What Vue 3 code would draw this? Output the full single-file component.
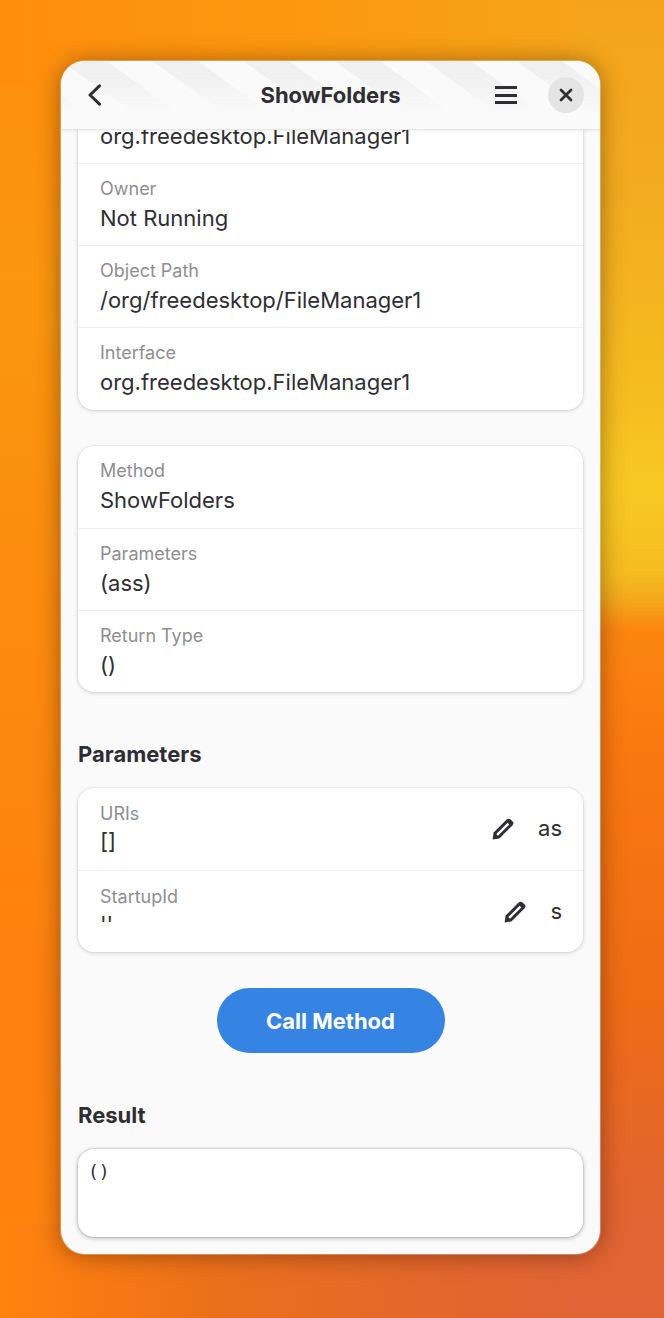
<script setup>
const cardA = [
  { label: 'Owner', value: 'Not Running' },
  { label: 'Object Path', value: '/org/freedesktop/FileManager1' },
  { label: 'Interface', value: 'org.freedesktop.FileManager1' },
]
const cardB = [
  { label: 'Method', value: 'ShowFolders' },
  { label: 'Parameters', value: '(ass)' },
  { label: 'Return Type', value: '()' },
]
const params = [
  { label: 'URIs', value: '[]', type: 'as' },
  { label: 'StartupId', value: "''", type: 's' },
]
</script>

<template>
  <div class="desktop">
    <div class="window">
      <header class="header">
        <div class="start">
          <button class="icon-btn back" aria-label="Back">
            <svg width="14" height="22" viewBox="0 0 14 22"><path d="M11.5 1.8 L2 11 L11.5 20.2" fill="none" stroke="#2e2e33" stroke-width="3" stroke-linecap="round" stroke-linejoin="round" /></svg>
          </button>
        </div>
        <h1 class="title">ShowFolders</h1>
        <div class="end">
          <button class="icon-btn menu" aria-label="Menu">
            <span></span><span></span><span></span>
          </button>
          <button class="close" aria-label="Close">
            <svg width="14" height="14" viewBox="0 0 14 14"><path d="M2 2 L12 12 M12 2 L2 12" stroke="#2e2e33" stroke-width="2.8" stroke-linecap="round" /></svg>
          </button>
        </div>
      </header>
      <main class="content">
        <section class="card first">
          <div class="row clipped">
            <div class="value">org.freedesktop.FileManager1</div>
          </div>
          <div v-for="r in cardA" :key="r.label" class="row">
            <div class="label">{{ r.label }}</div>
            <div class="value">{{ r.value }}</div>
          </div>
        </section>
        <section class="card second">
          <div v-for="r in cardB" :key="r.label" class="row">
            <div class="label">{{ r.label }}</div>
            <div class="value">{{ r.value }}</div>
          </div>
        </section>
        <h2 class="heading params-h">Parameters</h2>
        <section class="card">
          <div v-for="p in params" :key="p.label" class="row param">
            <div class="param-text">
              <div class="label">{{ p.label }}</div>
              <div class="value">{{ p.value }}</div>
            </div>
            <svg class="pencil" width="22" height="22" viewBox="0 0 22 22">
              <path d="M0.6 21.4 L1.6 14.6 L14.6 1.6 Q16.6 -0.2 18.6 1.4 L20.6 3.4 Q22.2 5.4 20.4 7.4 L7.4 20.4 Z" fill="#2e2e33" />
              <path d="M6 16 L15.6 6.4" stroke="#fff" stroke-width="2.4" stroke-linecap="square" />
            </svg>
            <div class="type">{{ p.type }}</div>
          </div>
        </section>
        <div class="actions">
          <button class="call">Call Method</button>
        </div>
        <h2 class="heading result-h">Result</h2>
        <div class="result">()</div>
      </main>
    </div>
  </div>
</template>

<style>
html, body { margin: 0; padding: 0; }
</style>

<style scoped>
.desktop {
  width: 664px;
  height: 1318px;
  box-sizing: border-box;
  padding: 61px 64px 64px 61px;
  overflow: hidden;
  font-family: Inter, "Noto Sans", sans-serif;
  color: #2e2e33;
  background-color: #fb8a0f;
  background-image:
    linear-gradient(180deg, #f5a31a 0, #f3ac1f 200px, #f5bb20 380px, #f8c822 490px, #f5bd20 570px, #f3a81c 600px, #fb8510 630px, #fa7810 750px, #ef6c15 1000px, #e26430 1200px, #e06436 1318px),
    linear-gradient(90deg, #ff8e0c 0, #fc980e 300px, #f5a51a 600px),
    linear-gradient(90deg, #fe840f 0, #f87a12 90px, #ec6f1c 220px, #e5682a 400px, #e06436 600px),
    linear-gradient(180deg, #ff8e0c 0, #fa960e 300px, #fd8a0e 650px, #fe800f 1000px, #fe840f 1318px);
  background-size: 94px 100%, 100% 91px, 100% 94px, 91px 100%;
  background-position: right top, left top, left bottom, left top;
  background-repeat: no-repeat;
}
.window {
  width: 539px;
  height: 1193px;
  border-radius: 24px;
  background: #fafafa;
  overflow: hidden;
  display: flex;
  flex-direction: column;
  box-shadow: 0 0 0 1px rgba(255, 255, 255, 0.3), 0 1px 24px rgba(50, 25, 0, 0.46);
}
.header {
  flex: none;
  position: relative;
  z-index: 1;
  height: 69px;
  box-sizing: border-box;
  display: grid;
  grid-template-columns: 1fr auto 1fr;
  align-items: center;
  padding: 0 16px;
  border-bottom: 1px solid #e6e6e6;
  box-shadow: 0 1px 3px rgba(0, 0, 0, 0.07);
  background:
    linear-gradient(180deg, rgba(250, 250, 250, 0) 20%, #fafafa 80%),
    repeating-linear-gradient(36deg, #fafafa 0 1.2px, #f0f0f0 2.2px 27.9px, #fafafa 28.9px 53.5px);
}
.start { display: flex; padding-left: 11px; }
.end {
  display: flex;
  align-items: center;
  justify-content: flex-end;
  gap: 31px;
}
.icon-btn, .close, .call {
  border: 0;
  padding: 0;
  background: none;
  font-family: inherit;
}
.back { width: 14px; height: 22px; }
.title {
  margin: 0;
  text-align: center;
  font-size: 22px;
  font-weight: 700;
  line-height: 28px;
}
.menu {
  width: 22px;
  height: 18px;
  display: flex;
  flex-direction: column;
  justify-content: space-between;
}
.menu span { display: block; height: 3px; background: #2e2e33; }
.close {
  width: 36px;
  height: 36px;
  border-radius: 50%;
  background: #e4e4e5;
  display: flex;
  align-items: center;
  justify-content: center;
}
.content {
  flex: 1;
  overflow: hidden;
  padding: 0 17px;
}
.card {
  background: #fff;
  border-radius: 16px;
  box-shadow: 0 0 0 1px rgba(0, 0, 0, 0.03), 0 1px 4px rgba(0, 0, 0, 0.16);
}
.first { margin-top: -49px; padding-bottom: 1px; }
.second { margin-top: 36px; }
.row {
  height: 82px;
  box-sizing: border-box;
  padding: 14px 21px 0 22px;
  border-top: 1px solid #ededed;
}
.row:first-child { border-top: 0; }
.row.clipped { padding-top: 37px; }
.label {
  font-size: 18px;
  line-height: 22px;
  color: #8e8e91;
}
.value {
  font-size: 22px;
  line-height: 28px;
  margin-top: 4px;
}
.row.param {
  display: flex;
  align-items: center;
  padding-top: 0;
}
.param-text { flex: 1; padding-bottom: 2px; }
.param .value { height: 24px; line-height: 24px; margin-top: 4px; }
.pencil { flex: none; }
.type { margin-left: 24px; font-size: 22px; margin-bottom: 2px; }
.heading {
  margin: 0;
  font-size: 22px;
  line-height: 26px;
  font-weight: 700;
}
.params-h { margin-top: 49px; margin-bottom: 21px; }
.actions {
  display: flex;
  justify-content: center;
  margin-top: 36px;
}
.call {
  width: 228px;
  height: 65px;
  border-radius: 33px;
  background: #3584e4;
  color: #fff;
  font-size: 22px;
  font-weight: 700;
}
.result-h { margin-top: 49px; margin-bottom: 21px; }
.result {
  height: 88px;
  box-sizing: border-box;
  padding: 11px 10px;
  border-radius: 16px;
  background: #fff;
  font-family: "DejaVu Sans Mono", "Liberation Mono", monospace;
  font-size: 18px;
  line-height: 24px;
  box-shadow: 0 0 0 1px rgba(0, 0, 0, 0.06), 0 1px 5px rgba(0, 0, 0, 0.3);
}
</style>
